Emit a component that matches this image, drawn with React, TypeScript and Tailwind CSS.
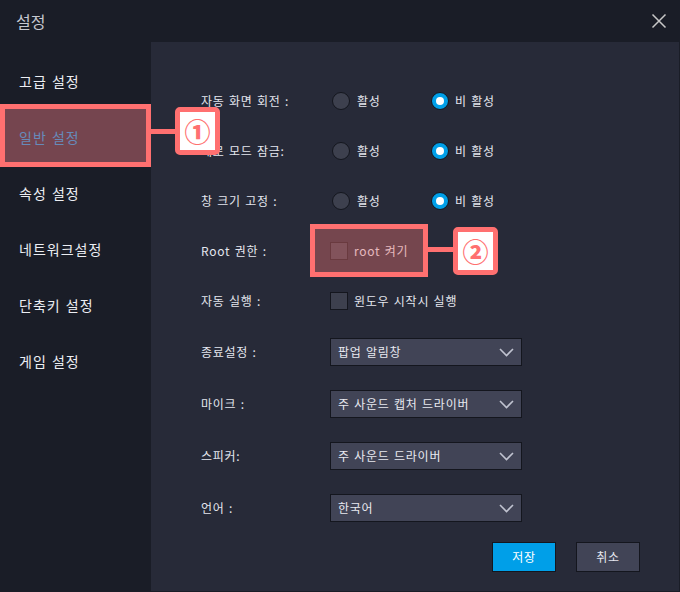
import React from 'react';

const menuItems = ['고급 설정', '일반 설정', '속성 설정', '네트워크설정', '단축키 설정', '게임 설정'];

const Label = ({ children }: { children: React.ReactNode }) => (
  <div className="w-[129px] shrink-0 text-[12px] tracking-[0.75px] text-[#e4e6ee] [word-spacing:1px]">{children}</div>
);

const Radio = ({ checked, label, className }: { checked?: boolean; label: string; className: string }) => (
  <div className={`flex items-center ${className}`}>
    {checked ? (
      <span className="flex h-[18px] w-[18px] items-center justify-center rounded-full border border-[#14161e] bg-[#009fe8]">
        <span className="h-[8px] w-[8px] rounded-full bg-white" />
      </span>
    ) : (
      <span className="h-[18px] w-[18px] rounded-full border border-[#14161e] bg-[#3d404e]" />
    )}
    <span className={`text-[12px] tracking-[0.75px] text-[#e4e6ee] [word-spacing:1px] ${checked ? 'ml-[6px]' : 'ml-[7px]'}`}>
      {label}
    </span>
  </div>
);

const RadioRow = ({ label }: { label: string }) => (
  <div className="flex h-[50px] items-center">
    <Label>{label}</Label>
    <Radio label="활성" className="w-[101px] pl-[2px]" />
    <Radio checked label="비 활성" className="" />
  </div>
);

const Checkbox = ({ label }: { label: string }) => (
  <div className="flex items-center">
    <span className="h-[18px] w-[18px] border border-[#14161e] bg-[#3d404e]" />
    <span className="ml-[6px] text-[12px] tracking-[0.75px] text-[#e4e6ee] [word-spacing:1px]">{label}</span>
  </div>
);

const SelectRow = ({ label, value }: { label: string; value: string }) => (
  <div className="flex h-[52px] items-center">
    <Label>{label}</Label>
    <div className="flex h-[28px] w-[192px] items-center justify-between border border-[#14161e] bg-[#414456] pl-[7px] pr-[7px] text-[12px] tracking-[0.75px] text-[#e8e9f0] [word-spacing:1px]">
      <span>{value}</span>
      <svg width="15" height="9" viewBox="0 0 15 9" fill="none" className="text-[#c0c3d0]">
        <path d="M1 1l6.5 6.5L14 1" stroke="currentColor" strokeWidth="1.6" />
      </svg>
    </div>
  </div>
);

const Badge = ({ children, className }: { children: React.ReactNode; className: string }) => (
  <div
    className={`absolute flex h-[48px] w-[45px] items-center justify-center rounded-[5px] border-[5px] border-[#ff7070] bg-white text-[26px] font-black leading-none text-[#ff7070] ${className}`}
  >
    {children}
  </div>
);

export default function App() {
  return (
    <div
      className="relative flex h-[592px] w-[680px] flex-col overflow-hidden bg-[#1a1d27]"
      style={{ fontFamily: '"Noto Sans CJK KR", "Liberation Sans", sans-serif' }}
    >
      <div className="flex h-[42px] shrink-0 items-center justify-between pl-[16px] pr-[13px]">
        <span className="text-[16px] text-[#c6c8d0]">설정</span>
        <svg width="16" height="16" viewBox="0 0 16 16" fill="none" className="text-[#c8c8c8]">
          <path d="M1.5 1.5l13 13M14.5 1.5l-13 13" stroke="currentColor" strokeWidth="1.5" />
        </svg>
      </div>

      <div className="flex flex-1">
        <div className="flex w-[151px] shrink-0 flex-col pt-[11px]">
          {menuItems.map((item, i) => (
            <div
              key={item}
              className={`flex h-[56px] items-center pl-[19px] text-[14px] tracking-[1px] [word-spacing:1px] ${
                i === 1 ? 'text-[#0090d8]' : 'text-[#eceef3]'
              }`}
            >
              {item}
            </div>
          ))}
        </div>

        <div className="mb-px mr-px flex flex-1 flex-col bg-[#272a38] pl-[50px] pt-[34px]">
          <RadioRow label="자동 화면 회전 :" />
          <RadioRow label="세로 모드 잠금:" />
          <RadioRow label="창 크기 고정 :" />
          <div className="flex h-[50px] items-center">
            <Label>Root 권한 :</Label>
            <Checkbox label="root 켜기" />
          </div>
          <div className="flex h-[50px] items-center">
            <Label>자동 실행 :</Label>
            <Checkbox label="윈도우 시작시 실행" />
          </div>
          <SelectRow label="종료설정 :" value="팝업 알림창" />
          <SelectRow label="마이크 :" value="주 사운드 캡처 드라이버" />
          <SelectRow label="스피커:" value="주 사운드 드라이버" />
          <SelectRow label="언어 :" value="한국어" />

          <div className="mt-[8px] flex gap-[20px] pl-[291px]">
            <button className="h-[30px] w-[64px] border border-[#14161e] bg-[#009fe8] text-[12px] tracking-[0.75px] text-white">
              저장
            </button>
            <button className="h-[30px] w-[64px] border border-[#14161e] bg-[#414456] text-[12px] tracking-[0.75px] text-[#e4e6ee]">
              취소
            </button>
          </div>
        </div>
      </div>

      {/* annotation overlays */}
      <div className="absolute left-0 top-[104px] h-[63px] w-[151px] border-[5px] border-[#ff7070] bg-[#ff818b]/40" />
      <div className="absolute left-[151px] top-[129px] h-[5px] w-[24px] bg-[#ff7070]" />
      <Badge className="left-[175px] top-[107px]">①</Badge>

      <div className="absolute left-[310px] top-[224px] h-[53px] w-[118px] border-[5px] border-[#ff7070] bg-[#ec7071]/40" />
      <div className="absolute left-[428px] top-[247px] h-[5px] w-[25px] bg-[#ff7070]" />
      <Badge className="left-[453px] top-[227px]">②</Badge>
    </div>
  );
}
